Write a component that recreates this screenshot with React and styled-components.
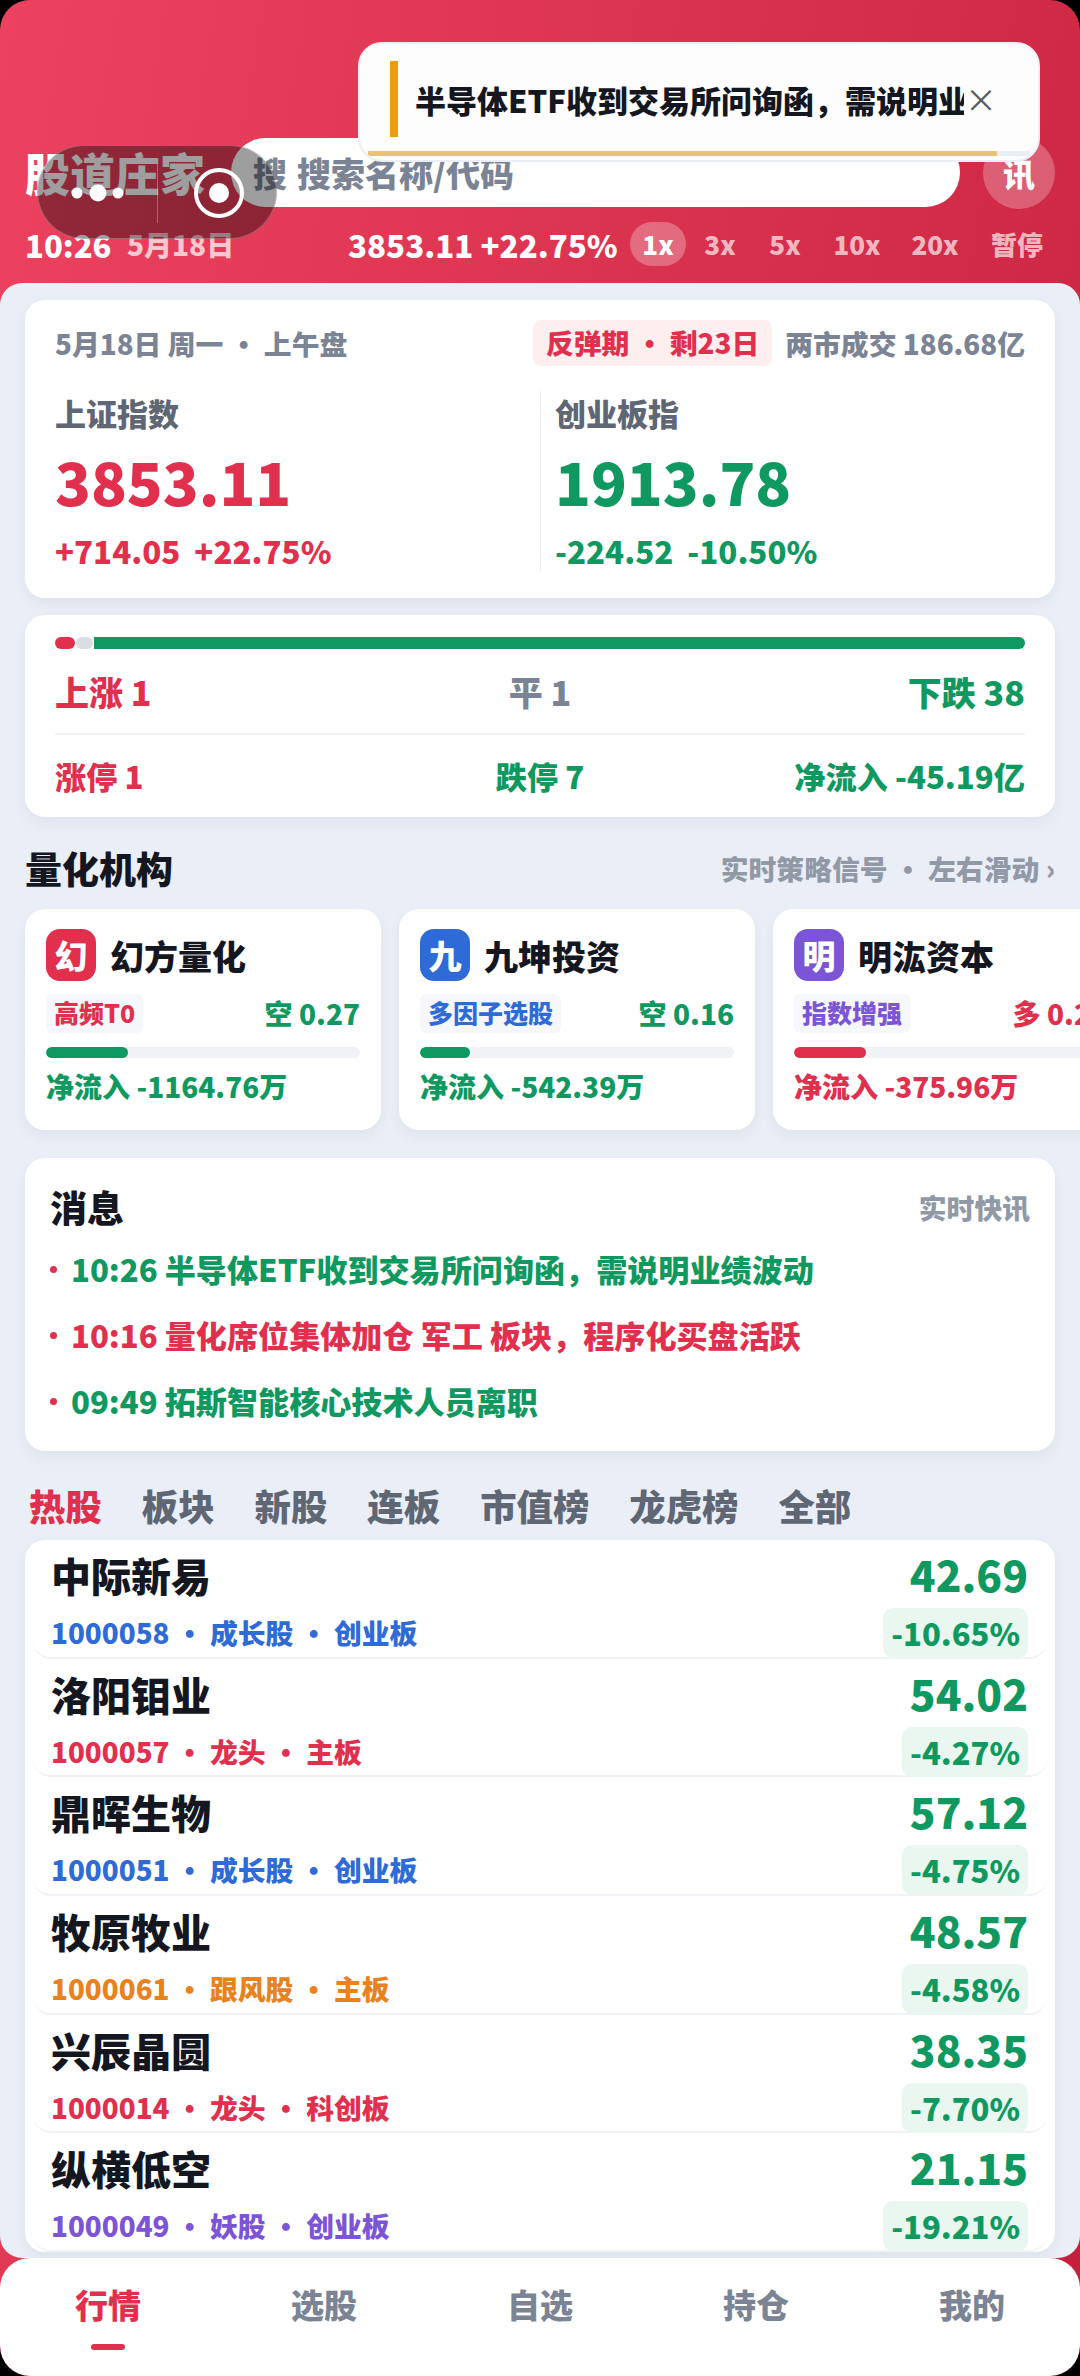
import React from 'react'
import styled, { createGlobalStyle } from 'styled-components'

const RED = '#e0304e'
const GREEN = '#0f9960'
const GRAY = '#7b8494'
const INK = '#14171f'
const tones = { red: RED, green: GREEN, gray: GRAY, blue: '#2f6bd6', purple: '#7b55d6', orange: '#e8821e' }

const Global = createGlobalStyle`
  html, body { margin: 0; padding: 0; background: #000; }
  * { box-sizing: border-box; }
  body { font-family: "Noto Sans CJK SC", "Noto Sans", sans-serif; font-weight: 900; }
`

const Screen = styled.div`
  position: relative;
  width: 1080px;
  height: 2376px;
  overflow: hidden;
  display: flex;
  flex-direction: column;
  border-radius: 30px;
  background: linear-gradient(100deg, #ec425f 0%, #c4203c 100%);
`

const Header = styled.header`
  flex: none;
  height: 283px;
  padding: 138px 25px 0;
  display: flex;
  flex-direction: column;
`

const TopRow = styled.div`
  display: flex;
  align-items: center;
  height: 69px;
`

const Brand = styled.div`
  flex: none;
  width: 206px;
  font-size: 45px;
  line-height: 68px;
  color: #fff;
  white-space: nowrap;
`

const SearchBox = styled.div`
  flex: none;
  width: 729px;
  height: 69px;
  display: flex;
  align-items: center;
  gap: 10px;
  padding-left: 22px;
  border-radius: 35px;
  background: #fff;
  color: ${GRAY};
  font-size: 34px;
`

const NewsButton = styled.div`
  flex: none;
  width: 72px;
  height: 72px;
  margin-left: 23px;
  border-radius: 50%;
  background: rgba(255, 255, 255, 0.25);
  color: #fff;
  font-size: 32px;
  display: flex;
  align-items: center;
  justify-content: center;
`

const TickerRow = styled.div`
  display: flex;
  align-items: center;
  height: 44px;
  margin-top: 15px;
  color: #fff;
  white-space: nowrap;
`

const Clock = styled.span`
  flex: none;
  font-size: 31px;
  width: 102px;
`

const DateText = styled.span`
  flex: none;
  font-size: 28px;
  width: 221px;
  color: rgba(255, 255, 255, 0.72);
`

const IndexText = styled.span`
  flex: none;
  font-size: 31.3px;
  width: 282px;
`

const Speed = styled.span`
  flex: none;
  width: ${p => p.$w}px;
  height: 44px;
  line-height: 44px;
  text-align: center;
  font-size: 26px;
  border-radius: 22px;
  color: ${p => (p.$on ? '#fff' : 'rgba(255,255,255,0.68)')};
  background: ${p => (p.$on ? 'rgba(255,255,255,0.28)' : 'transparent')};
`

const Capsule = styled.div`
  position: absolute;
  left: 37px;
  top: 145px;
  width: 240px;
  height: 94px;
  border-radius: 47px;
  background: rgba(0, 0, 0, 0.38);
  border: 1px solid rgba(255, 255, 255, 0.25);
`

const CapsuleLine = styled.i`
  position: absolute;
  left: 119px;
  top: 18px;
  width: 1px;
  height: 59px;
  background: rgba(255, 255, 255, 0.3);
`

const CapsuleDots = styled.svg`
  position: absolute;
  left: 27px;
  top: 27px;
`

const CapsuleTarget = styled.svg`
  position: absolute;
  left: 154px;
  top: 20px;
`

const Toast = styled.div`
  position: absolute;
  left: 358px;
  top: 42px;
  width: 682px;
  height: 120px;
  padding-left: 30px;
  display: flex;
  align-items: center;
  border-radius: 24px;
  background: #fdfdfd;
  border: 2px solid #eceef5;
  overflow: hidden;
`

const ToastBar = styled.i`
  flex: none;
  width: 8px;
  height: 76px;
  margin-top: -6px;
  background: #f09c10;
`

const ToastText = styled.div`
  flex: none;
  width: 549px;
  margin: -6px 0 0 17px;
  font-size: 31px;
  color: ${INK};
  white-space: nowrap;
  overflow: hidden;
`

const ToastClose = styled.span`
  margin: -8px 0 0 1px;
  font-size: 32px;
  font-weight: 400;
  color: #555a64;
`

const ToastTrack = styled.div`
  position: absolute;
  left: 8px;
  right: 8px;
  bottom: 4px;
  height: 5px;
  background: #eceef5;
`

const ToastFill = styled.div`
  height: 100%;
  background: #e9c277;
`

const Panel = styled.main`
  flex: 1;
  min-height: 0;
  overflow: hidden;
  padding: 17px 25px 0;
  border-radius: 22px;
  background: #eaeef6;
`

const Card = styled.section`
  background: #fff;
  border-radius: 20px;
  box-shadow: 0 6px 14px rgba(40, 50, 80, 0.06);
`

const MarketCard = styled(Card)`
  height: 298px;
  padding: 20px 30px 0;
`

const MarketHead = styled.div`
  display: flex;
  align-items: center;
  height: 46px;
  font-size: 27.8px;
  color: ${GRAY};
  white-space: nowrap;
`

const PhasePill = styled.span`
  margin-left: auto;
  height: 46px;
  line-height: 44px;
  padding: 0 13px;
  border-radius: 8px;
  background: #fdeef0;
  color: ${RED};
`

const Turnover = styled.span`
  margin-left: 13px;
`

const IndexGrid = styled.div`
  display: grid;
  grid-template-columns: 1fr 1fr;
  margin-top: 25px;
`

const IndexCol = styled.div`
  height: 180px;
  ${p => p.$right && 'border-left: 1px solid #e8ebf1; padding-left: 14px;'}
`

const IndexLabel = styled.div`
  font-size: 31px;
  line-height: 44px;
  color: #5f6674;
`

const IndexValue = styled.div`
  font-size: 59px;
  line-height: 90px;
  margin-top: 1px;
  color: ${p => tones[p.$tone]};
`

const IndexChange = styled.div`
  display: flex;
  gap: 14px;
  font-size: 31.3px;
  line-height: 42px;
  margin-top: 4px;
  color: ${p => tones[p.$tone]};
`

const BreadthCard = styled(Card)`
  height: 202px;
  margin-top: 17px;
  padding: 22px 30px 0;
`

const BreadthBar = styled.div`
  display: flex;
  gap: 1px;
  height: 12px;
`

const BreadthPart = styled.div`
  width: ${p => p.$w}px;
  flex-grow: ${p => (p.$grow ? 1 : 0)};
  border-radius: ${p => (p.$grow ? '0 6px 6px 0' : '6px')};
  background: ${p => p.$color};
`

const StatRow = styled.div`
  display: grid;
  grid-template-columns: 1fr 1fr 1fr;
  align-items: center;
  height: ${p => p.$h}px;
  font-size: ${p => p.$size}px;
  ${p => p.$line && 'border-bottom: 2px solid #eff1f5;'}
`

const StatItem = styled.span`
  white-space: nowrap;
  text-align: ${p => p.$align};
  color: ${p => tones[p.$tone]};
`

const SectionHead = styled.div`
  display: flex;
  justify-content: space-between;
  align-items: center;
  height: 92px;
  padding-top: 9px;
`

const SectionTitle = styled.h2`
  margin: 0;
  font-size: 37px;
  font-weight: 900;
  color: ${INK};
`

const SectionHint = styled.span`
  font-size: 27.8px;
  color: #9199a6;
`

const QuantRow = styled.div`
  display: flex;
  gap: 18px;
  width: 1200px;
`

const QuantCard = styled(Card)`
  flex: none;
  width: 356px;
  height: 221px;
  padding: 20px 21px 0;
`

const QuantTitle = styled.div`
  display: flex;
  align-items: center;
  gap: 14px;
  font-size: 34px;
  color: ${INK};
`

const QuantIcon = styled.span`
  width: 50px;
  height: 52px;
  border-radius: 14px;
  font-size: 33px;
  display: flex;
  align-items: center;
  justify-content: center;
  color: #fff;
  background: ${p => tones[p.$tone]};
`

const QuantMeta = styled.div`
  display: flex;
  justify-content: space-between;
  align-items: center;
  margin-top: 12px;
`

const QuantTag = styled.span`
  height: 39px;
  line-height: 37px;
  padding: 0 8px;
  border-radius: 6px;
  background: #f6f7fb;
  font-size: 25px;
  color: ${p => tones[p.$tone]};
`

const QuantSignal = styled.span`
  font-size: 28px;
  white-space: nowrap;
  color: ${p => tones[p.$tone]};
`

const Meter = styled.div`
  height: 11px;
  margin-top: 14px;
  border-radius: 6px;
  background: #f0f2f6;
  overflow: hidden;
`

const MeterFill = styled.div`
  height: 100%;
  border-radius: 6px;
  background: ${p => tones[p.$tone]};
`

const QuantFlow = styled.div`
  margin-top: 8px;
  font-size: 28px;
  white-space: nowrap;
  color: ${p => tones[p.$tone]};
`

const NewsCard = styled(Card)`
  height: 293px;
  margin-top: 28px;
  padding: 19px 25px 0;
`

const NewsHead = styled.div`
  display: flex;
  justify-content: space-between;
  align-items: center;
  height: 59px;
`

const NewsRow = styled.div`
  position: relative;
  height: 66px;
  padding-left: 21px;
  line-height: 66px;
  font-size: 31.1px;
  white-space: nowrap;
  color: ${p => tones[p.$tone]};
  &::before {
    content: '';
    position: absolute;
    left: 0;
    top: 30px;
    width: 7px;
    height: 7px;
    border-radius: 50%;
    background: ${RED};
  }
`

const TabStrip = styled.nav`
  display: flex;
  align-items: center;
  gap: 40px;
  height: 89px;
  padding: 18px 0 0 4px;
`

const Tab = styled.span`
  font-size: 36.4px;
  color: ${p => (p.$on ? RED : '#5f6674')};
`

const StockCard = styled(Card)`
  padding: 0 8px;
`

const StockRow = styled.div`
  height: 118.7px;
  padding: 0 19px 0 18px;
  display: flex;
  justify-content: space-between;
  border-bottom: 2px solid #f0f2f6;
  border-radius: 0 0 18px 18px;
`

const StockLeft = styled.div`
  display: flex;
  flex-direction: column;
`

const StockName = styled.div`
  font-size: 40px;
  line-height: 70px;
  color: ${INK};
`

const StockSub = styled.div`
  font-size: 27.8px;
  line-height: 36px;
  margin-top: 4px;
  color: ${p => tones[p.$tone]};
`

const StockRight = styled.div`
  display: flex;
  flex-direction: column;
  align-items: flex-end;
`

const StockPrice = styled.div`
  font-size: 42.4px;
  line-height: 68px;
  color: ${GREEN};
`

const StockPct = styled.div`
  height: 50px;
  line-height: 50px;
  padding: 0 8px;
  border-radius: 10px;
  background: #e9f7f0;
  font-size: 31px;
  color: ${GREEN};
`

const BottomBar = styled.footer`
  flex: none;
  height: 118px;
  display: grid;
  grid-template-columns: repeat(5, 216px);
  border-radius: 30px;
  background: #fff;
`

const BarItem = styled.div`
  position: relative;
  padding-top: 22px;
  text-align: center;
  font-size: 33px;
  color: ${p => (p.$on ? RED : GRAY)};
  ${p => p.$on && `
    &::after {
      content: '';
      position: absolute;
      left: 91px;
      top: 86px;
      width: 34px;
      height: 6px;
      border-radius: 3px;
      background: ${RED};
    }
  `}
`

const speeds = [
  { label: '1x', w: 56, on: true },
  { label: '3x', w: 68 },
  { label: '5x', w: 62 },
  { label: '10x', w: 82 },
  { label: '20x', w: 74 },
  { label: '暂停', w: 90 },
]

const quants = [
  { icon: '幻', name: '幻方量化', tag: '高频T0', tagTone: 'red', iconTone: 'red', signal: '空 0.27', signalTone: 'green', fill: 26, flow: '净流入 -1164.76万', flowTone: 'green' },
  { icon: '九', name: '九坤投资', tag: '多因子选股', tagTone: 'blue', iconTone: 'blue', signal: '空 0.16', signalTone: 'green', fill: 16, flow: '净流入 -542.39万', flowTone: 'green' },
  { icon: '明', name: '明汯资本', tag: '指数增强', tagTone: 'purple', iconTone: 'purple', signal: '多 0.23', signalTone: 'red', fill: 23, flow: '净流入 -375.96万', flowTone: 'red' },
]

const news = [
  { text: '10:26 半导体ETF收到交易所问询函，需说明业绩波动', tone: 'green' },
  { text: '10:16 量化席位集体加仓 军工 板块，程序化买盘活跃', tone: 'red' },
  { text: '09:49 拓斯智能核心技术人员离职', tone: 'green' },
]

const tabs = ['热股', '板块', '新股', '连板', '市值榜', '龙虎榜', '全部']

const stocks = [
  { name: '中际新易', sub: '1000058 · 成长股 · 创业板', tone: 'blue', price: '42.69', pct: '-10.65%' },
  { name: '洛阳钼业', sub: '1000057 · 龙头 · 主板', tone: 'red', price: '54.02', pct: '-4.27%' },
  { name: '鼎晖生物', sub: '1000051 · 成长股 · 创业板', tone: 'blue', price: '57.12', pct: '-4.75%' },
  { name: '牧原牧业', sub: '1000061 · 跟风股 · 主板', tone: 'orange', price: '48.57', pct: '-4.58%' },
  { name: '兴辰晶圆', sub: '1000014 · 龙头 · 科创板', tone: 'red', price: '38.35', pct: '-7.70%' },
  { name: '纵横低空', sub: '1000049 · 妖股 · 创业板', tone: 'purple', price: '21.15', pct: '-19.21%' },
]

const navItems = ['行情', '选股', '自选', '持仓', '我的']

export default function App () {
  return (
    <Screen>
      <Global />
      <Header>
        <TopRow>
          <Brand>股道庄家</Brand>
          <SearchBox>
            <span>搜</span>
            <span>搜索名称/代码</span>
          </SearchBox>
          <NewsButton>讯</NewsButton>
        </TopRow>
        <TickerRow>
          <Clock>10:26</Clock>
          <DateText>5月18日</DateText>
          <IndexText>3853.11 +22.75%</IndexText>
          {speeds.map(s => (
            <Speed key={s.label} $w={s.w} $on={s.on}>{s.label}</Speed>
          ))}
        </TickerRow>
      </Header>

      <Panel>
        <MarketCard>
          <MarketHead>
            <span>5月18日 周一 · 上午盘</span>
            <PhasePill>反弹期 · 剩23日</PhasePill>
            <Turnover>两市成交 186.68亿</Turnover>
          </MarketHead>
          <IndexGrid>
            <IndexCol>
              <IndexLabel>上证指数</IndexLabel>
              <IndexValue $tone="red">3853.11</IndexValue>
              <IndexChange $tone="red"><span>+714.05</span><span>+22.75%</span></IndexChange>
            </IndexCol>
            <IndexCol $right>
              <IndexLabel>创业板指</IndexLabel>
              <IndexValue $tone="green">1913.78</IndexValue>
              <IndexChange $tone="green"><span>-224.52</span><span>-10.50%</span></IndexChange>
            </IndexCol>
          </IndexGrid>
        </MarketCard>

        <BreadthCard>
          <BreadthBar>
            <BreadthPart $w={20} $color={RED} />
            <BreadthPart $w={17} $color="#d9dde4" />
            <BreadthPart $w={0} $grow $color={GREEN} />
          </BreadthBar>
          <StatRow $h={86} $size={34} $line>
            <StatItem $tone="red" $align="left">上涨 1</StatItem>
            <StatItem $tone="gray" $align="center">平 1</StatItem>
            <StatItem $tone="green" $align="right">下跌 38</StatItem>
          </StatRow>
          <StatRow $h={80} $size={31.2}>
            <StatItem $tone="red" $align="left">涨停 1</StatItem>
            <StatItem $tone="green" $align="center">跌停 7</StatItem>
            <StatItem $tone="green" $align="right">净流入 -45.19亿</StatItem>
          </StatRow>
        </BreadthCard>

        <SectionHead>
          <SectionTitle>量化机构</SectionTitle>
          <SectionHint>实时策略信号 · 左右滑动 ›</SectionHint>
        </SectionHead>
        <QuantRow>
          {quants.map(q => (
            <QuantCard key={q.name}>
              <QuantTitle>
                <QuantIcon $tone={q.iconTone}>{q.icon}</QuantIcon>
                {q.name}
              </QuantTitle>
              <QuantMeta>
                <QuantTag $tone={q.tagTone}>{q.tag}</QuantTag>
                <QuantSignal $tone={q.signalTone}>{q.signal}</QuantSignal>
              </QuantMeta>
              <Meter><MeterFill $tone={q.signalTone} style={{ width: `${q.fill}%` }} /></Meter>
              <QuantFlow $tone={q.flowTone}>{q.flow}</QuantFlow>
            </QuantCard>
          ))}
        </QuantRow>

        <NewsCard>
          <NewsHead>
            <SectionTitle>消息</SectionTitle>
            <SectionHint>实时快讯</SectionHint>
          </NewsHead>
          {news.map(n => (
            <NewsRow key={n.text} $tone={n.tone}>{n.text}</NewsRow>
          ))}
        </NewsCard>

        <TabStrip>
          {tabs.map((t, i) => (
            <Tab key={t} $on={i === 0}>{t}</Tab>
          ))}
        </TabStrip>

        <StockCard>
          {stocks.map(s => (
            <StockRow key={s.name}>
              <StockLeft>
                <StockName>{s.name}</StockName>
                <StockSub $tone={s.tone}>{s.sub}</StockSub>
              </StockLeft>
              <StockRight>
                <StockPrice>{s.price}</StockPrice>
                <StockPct>{s.pct}</StockPct>
              </StockRight>
            </StockRow>
          ))}
        </StockCard>
      </Panel>

      <BottomBar>
        {navItems.map((n, i) => (
          <BarItem key={n} $on={i === 0}>{n}</BarItem>
        ))}
      </BottomBar>

      <Capsule>
        <CapsuleLine />
        <CapsuleDots width="70" height="40" viewBox="0 0 70 40">
          <circle cx="12" cy="20" r="5.5" fill="#fff" />
          <circle cx="33" cy="20" r="8.5" fill="#fff" />
          <circle cx="53" cy="20" r="5.5" fill="#fff" />
        </CapsuleDots>
        <CapsuleTarget width="54" height="54" viewBox="0 0 54 54">
          <circle cx="27" cy="27" r="23" fill="none" stroke="#fff" strokeWidth="4" />
          <circle cx="27" cy="27" r="10" fill="#fff" />
        </CapsuleTarget>
      </Capsule>

      <Toast>
        <ToastBar />
        <ToastText>半导体ETF收到交易所问询函，需说明业绩波动</ToastText>
        <ToastClose>×</ToastClose>
        <ToastTrack><ToastFill style={{ width: '95%' }} /></ToastTrack>
      </Toast>
    </Screen>
  )
}
